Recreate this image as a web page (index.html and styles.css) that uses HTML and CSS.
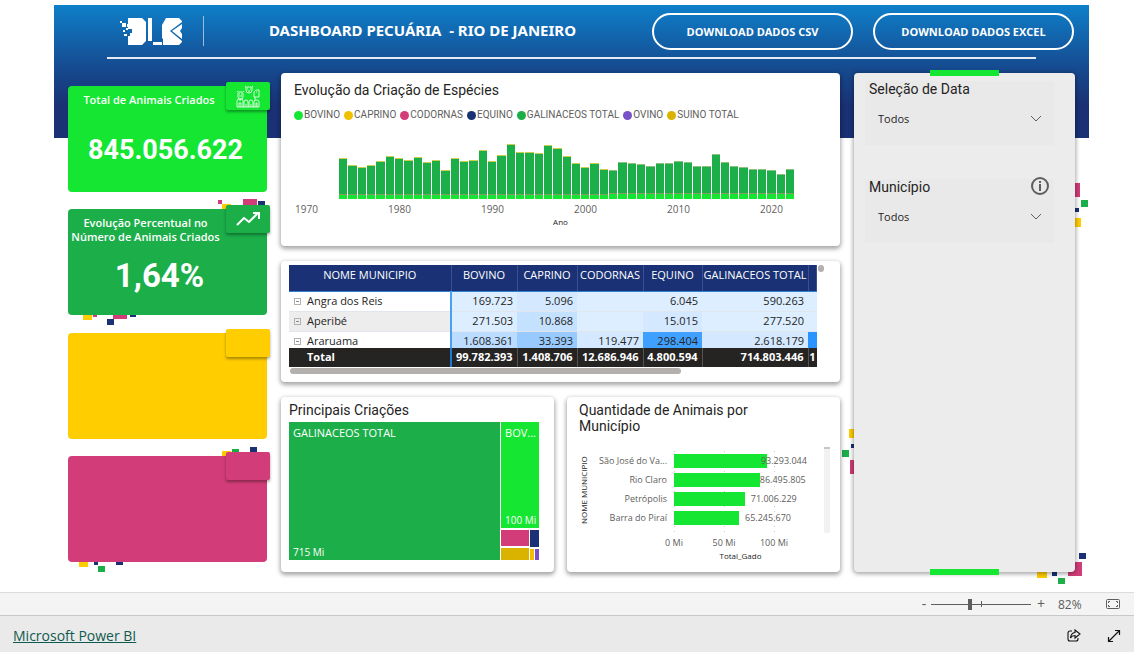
FILE: index.html
```html
<!DOCTYPE html>
<html lang="pt-BR">
<head>
<meta charset="utf-8">
<title>Dashboard Pecuária - Rio de Janeiro</title>
<link rel="stylesheet" href="styles.css">
</head>
<body>
<main class="report">
  <header class="top">
    <svg class="logo" viewBox="0 0 62 28" fill="#fff" aria-label="DLB">
      <path d="M8 1H22L26 5V24L22 28H8V19H10V16H12V12H8Z"/>
      <path d="M0 4h2v2H0zM2 6h4v4H2zM7 7h3v3H7zM6 11h2v2H6zM3 13h2v2H3zM4 17h3v2H4z"/>
      <path d="M28 1H32V24H28Z M33 25H42V28H33Z"/>
      <path d="M46 1H59L62 4V5L50 14L62 24V25L59 28H43V22L42 21V8Z"/>
      <path d="M62 7V11L60 14L62 17V22L52 14Z"/>
    </svg>
    <span class="divider"></span>
    <h1>DASHBOARD PECUÁRIA &nbsp;- RIO DE JANEIRO</h1>
    <div class="downloads">
      <button class="download" type="button">DOWNLOAD DADOS CSV</button>
      <button class="download" type="button">DOWNLOAD DADOS EXCEL</button>
    </div>
  </header>
  <hr class="rule">
  <div class="board">
    <section class="kpis">
      <article class="kpi lime">
        <h2>Total de Animais Criados</h2><strong>845.056.622</strong>
        <span class="badge"><svg class="herd" viewBox="0 0 24 24" fill="none" stroke="#fff" stroke-width="0.8"><path d="M9 2q1 2 3 1h2q2 1 3-1M10 3v3q0 3 3 3t3-3V3M11 5h1M14 5h1M12 7h2M1 7q1 2 2 1h3q1 1 2-1M2 9v4q0 2 2 2h1q2 0 2-2V9M3 10h1M5 10h1M3 12h3M4 15v2M18 8l2-2h3v7h-5v-3zM20 8h1M19 13v3M1 23V17q0-2 2-2h2q2 0 2 2v6M3 23v-4h2v4M8 23v-5q0-2 2-2t2 2v5M10 23v-3M13 23v-5q0-2 2-2t2 2v5M15 23v-3M18 23v-5q0-2 2-2h1q2 0 2 2v5M20 23v-4h1v4M1 23h22"/></svg></span>
      </article>
      <article class="kpi green">
        <i class="confetti nw"><svg viewBox="0 0 48 12"><path fill="#d23c78" d="M0 2h4v4H0zM25 1h14v8H25z"/><path fill="#ffcd00" d="M4 6h9v6H4z"/><path fill="#1a3275" d="M40 3h7v6h-7z"/></svg></i>
        <i class="confetti sw"><svg viewBox="0 0 56 12"><path fill="#ffcd00" d="M0 0h9v5H0z"/><path fill="#d23c78" d="M10 0h4v2h-4zM30 0h14v4H30z"/><path fill="#1a3275" d="M24 4h7v6h-7zM47 0h6v2h-6z"/></svg></i>
        <h2>Evolução Percentual no Número de Animais Criados</h2><strong>1,64%</strong>
        <span class="badge"><svg class="trend" viewBox="0 0 24 16" fill="none" stroke="#fff" stroke-width="2"><path d="M1 14L8 7L13 11L22 2M17 2h6v6"/></svg></span>
      </article>
      <article class="kpi yellow"><span class="badge"></span></article>
      <article class="kpi pink">
        <i class="confetti nw"><svg viewBox="0 0 48 12"><path fill="#ffcd00" d="M4 6h9v6H4z"/><path fill="#1bae49" d="M14 4h7v6h-7z"/><path fill="#1a3275" d="M32 2h7v6h-7z"/></svg></i>
        <i class="confetti sw"><svg viewBox="0 0 56 12"><path fill="#ffcd00" d="M-4 0h9v5h-9z"/><path fill="#1a3275" d="M11 0h4v3h-4zM33 0h7v3h-7z"/><path fill="#1bae49" d="M15 4h7v6h-7z"/></svg></i>
        <span class="badge"></span>
      </article>
    </section>

    <section class="visuals">
      <article class="card evolution">
        <h2>Evolução da Criação de Espécies</h2>
        <ul class="legend">
          <li class="k-lime">BOVINO</li><li class="k-gold">CAPRINO</li><li class="k-pink">CODORNAS</li><li class="k-navy">EQUINO</li><li class="k-green">GALINACEOS TOTAL</li><li class="k-purple">OVINO</li><li class="k-mustard">SUINO TOTAL</li>
        </ul>
        <div class="columns" id="columns"></div>
        <div class="years"><span>1970</span><span>1980</span><span>1990</span><span>2000</span><span>2010</span><span>2020</span></div>
        <p class="axis-title">Ano</p>
      </article>

      <article class="card matrix">
        <div class="grid-row">
          <table>
            <colgroup><col class="c-name"><col class="c-bov"><col class="c-cap"><col class="c-cod"><col class="c-equ"><col class="c-gal"><col class="c-more"></colgroup>
            <thead><tr><th>NOME MUNICIPIO</th><th>BOVINO</th><th>CAPRINO</th><th>CODORNAS</th><th>EQUINO</th><th>GALINACEOS TOTAL</th><th></th></tr></thead>
            <tbody>
              <tr><td><button class="toggle" type="button" aria-label="Expandir"></button>Angra dos Reis</td><td>169.723</td><td class="h1">5.096</td><td></td><td>6.045</td><td>590.263</td><td></td></tr>
              <tr class="alt"><td><button class="toggle" type="button" aria-label="Expandir"></button>Aperibé</td><td>271.503</td><td class="h2">10.868</td><td></td><td class="h1">15.015</td><td>277.520</td><td></td></tr>
              <tr class="cut"><td><div><button class="toggle" type="button" aria-label="Expandir"></button>Araruama</div></td><td class="h3"><div>1.608.361</div></td><td class="h4"><div>33.393</div></td><td class="h1"><div>119.477</div></td><td class="h5"><div>298.404</div></td><td class="h1"><div>2.618.179</div></td><td class="h6"></td></tr>
            </tbody>
            <tfoot><tr><td>Total</td><td>99.782.393</td><td>1.408.706</td><td>12.686.946</td><td>4.800.594</td><td>714.803.446</td><td class="last">1</td></tr></tfoot>
          </table>
          <span class="v-thumb"></span>
        </div>
        <span class="h-thumb"></span>
      </article>

      <div class="pair">
        <article class="card tree">
          <h2>Principais Criações</h2>
          <div class="treemap">
            <div class="tile green big"><span>GALINACEOS TOTAL</span><span>715 Mi</span></div>
            <div class="side">
              <div class="tile lime"><span>BOV...</span><span>100 Mi</span></div>
              <div class="small">
                <div class="stack"><i class="t-pink"></i><i class="t-mustard"></i></div>
                <div class="stack narrow"><i class="t-navy"></i><div class="tiny"><i class="t-gold"></i><i class="t-purple"></i></div></div>
              </div>
            </div>
          </div>
        </article>
        <article class="card ranking">
          <h2>Quantidade de Animais por Município</h2>
          <div class="bars">
            <span class="y-title">NOME MUNICIPIO</span>
            <ul class="names"><li>São José do Va...</li><li>Rio Claro</li><li>Petrópolis</li><li>Barra do Piraí</li></ul>
            <div class="plot">
              <div class="bar"><i style="width:65%"></i><span class="over">93.293.044</span></div>
              <div class="bar"><i style="width:60%"></i><span class="flush">86.495.805</span></div>
              <div class="bar"><i style="width:49.500%"></i><span>71.006.229</span></div>
              <div class="bar"><i style="width:45.500%"></i><span>65.245.670</span></div>
            </div>
            <span class="track"></span>
            <div class="ticks"><span>0 Mi</span><span>50 Mi</span><span>100 Mi</span></div>
            <p class="x-title">Total_Gado</p>
          </div>
        </article>
      </div>
    </section>

    <aside class="filters">
      <i class="confetti right"><svg viewBox="0 0 14 46"><path fill="#d23c78" d="M0 1h5v14H0z"/><path fill="#1bae49" d="M6 18h7v7H6z"/><path fill="#1a3275" d="M0 26h4v4H0z"/><path fill="#ffcd00" d="M0 36h6v9H0z"/></svg></i>
      <i class="confetti left"><svg viewBox="0 0 14 46"><path fill="#ffcd00" d="M9 0h5v9H9z"/><path fill="#1a3275" d="M11 15h3v4h-3z"/><path fill="#1bae49" d="M2 21h7v7H2z"/><path fill="#d23c78" d="M10 31h4v14h-4z"/></svg></i>
      <i class="confetti corner"><svg viewBox="0 0 50 34"><path fill="#ffcd00" d="M0 19h10v7H0z"/><path fill="#1a3275" d="M15 19h5v5h-5zM42 1h7v6h-7z"/><path fill="#d23c78" d="M31 10h14v14H31z"/><path fill="#1bae49" d="M21 26h7v6h-7z"/></svg></i>
      <div class="panel">
        <div class="filter">
          <label for="data">Seleção de Data</label>
          <div class="pick"><select id="data"><option>Todos</option></select><svg class="chev" viewBox="0 0 12 7"><path d="M1 1l5 5 5-5"/></svg></div>
        </div>
        <div class="filter">
          <label for="mun">Município</label>
          <div class="pick"><select id="mun"><option>Todos</option></select><svg class="chev" viewBox="0 0 12 7"><path d="M1 1l5 5 5-5"/></svg></div>
          <button class="info" type="button" aria-label="Informações"><svg viewBox="0 0 18 18"><circle cx="9" cy="9" r="8" fill="none" stroke="#605e5c" stroke-width="2"/><path fill="#605e5c" d="M8 4h2v2H8zM8 7h2v7H8z"/></svg></button>
        </div>
      </div>
    </aside>
  </div>
</main>

<div class="zoombar">
  <button type="button" aria-label="Reduzir">-</button>
  <div class="slider"><input type="range" min="0" max="100" value="39" aria-label="Zoom"></div>
  <button type="button" aria-label="Ampliar">+</button>
  <span class="pct">82%</span>
  <button class="fit" type="button" aria-label="Ajustar à página"><svg viewBox="0 0 14 10" fill="none" stroke="#605e5c"><rect x=".5" y=".5" width="13" height="9" rx="1"/><path d="M2.500 4V2.500H4M10 2.500h1.500V4M11.500 6v1.500H10M4 7.500H2.500V6"/></svg></button>
</div>
<footer class="foot">
  <a href="#">Microsoft Power BI</a>
  <button type="button" aria-label="Compartilhar"><svg viewBox="0 0 14 14" fill="none" stroke="#111" stroke-width="1.100"><path d="M5 2H3Q1 2 1 4v6q0 2 2 2h6q2 0 2-2V9M8 1l5 4-5 4V6.500Q5 6.500 3.500 9 4 4 8 3.500z"/></svg></button>
  <button type="button" aria-label="Tela cheia"><svg viewBox="0 0 14 14" fill="none" stroke="#111" stroke-width="1.200"><path d="M1.500 12.500l11-11M8 1.500h4.500V6M1.500 8v4.500H6"/></svg></button>
</footer>
<script src="chart.js"></script>
</body>
</html>
```

FILE: styles.css
```css
* { box-sizing: border-box; margin: 0; padding: 0; }
body { display: flex; flex-direction: column; min-height: 100vh; background: #fff; color: #252423; font-family: "Open Sans", "Noto Sans", sans-serif; font-size: 11px; }
button { background: none; border: 0; font: inherit; color: inherit; cursor: pointer; }
ul { list-style: none; }
svg { display: block; }

.report { flex: 1; margin: 5px 45px 0 54px; padding-bottom: 20px; background: linear-gradient(#0e7fc9, #16488d 66px, #1a3275 100px) no-repeat 0 0 / 100% 133px; }
.top { display: flex; align-items: center; gap: 21px; height: 52px; padding: 0 15px 0 66px; color: #fff; }
.logo { width: 62px; height: 28px; }
.divider { width: 1px; height: 30px; background: #9fb9d8; }
.top h1 { flex: 1; padding: 0 11px 2px 0; font-size: 15px; font-weight: 700; text-align: center; white-space: nowrap; font-family: "Noto Sans", sans-serif; }
.downloads { display: flex; gap: 20px; }
.download { width: 201px; height: 37px; border: 2px solid #fff; border-radius: 19px; font-size: 11px; font-weight: 700; white-space: nowrap; }
.rule { margin: 0 53px; border: 0; height: 2px; background: #e4ebf4; }

.board { display: grid; grid-template-columns: 199fr 559fr 221fr; gap: 14px; margin: 14px 14px 0; position: relative; z-index: 0; }
.confetti { position: absolute; z-index: -1; }
.nw { width: 48px; height: 12px; top: -11px; right: 1px; }
.sw { width: 56px; height: 12px; top: 100%; left: 15px; }
.sw svg { overflow: visible; }

.kpis { display: flex; flex-direction: column; justify-content: space-between; padding: 13px 0 10px; }
.kpi { position: relative; height: 106px; border-radius: 4px; color: #fff; text-align: center; }
.kpi h2 { padding: 7px 44px 0 0; font-size: 11px; line-height: 14px; font-weight: 600; }
.kpi strong { position: absolute; left: 0; right: 4px; bottom: 23px; font-family: Roboto, sans-serif; font-size: 27px; line-height: 38px; font-weight: 700; }
.kpi.lime h2 { padding-right: 37px; }
.kpi.green strong { right: 16px; bottom: 20px; font-size: 33px; }
.badge { position: absolute; top: -4px; right: -3px; display: grid; place-items: center; width: 44px; height: 28px; border-radius: 2px; background: inherit; box-shadow: 0 2px 3px rgba(0,0,0,.35); }
.herd { width: 24px; height: 24px; }
.trend { width: 24px; height: 16px; }
.lime { background: #14e632; }
.green { background: #1bae49; }
.yellow { background: #ffcd00; }
.pink { background: #d23c78; }

.visuals { display: flex; flex-direction: column; gap: 15px; min-width: 0; }
.card { min-width: 0; background: #fff; border-radius: 4px; box-shadow: 0 2px 4px 1px rgba(0,0,0,.35); }
.card h2, .filter label { font-family: Roboto, sans-serif; font-size: 14px; font-weight: 400; line-height: 16px; }

.evolution { height: 173px; padding-top: 9px; }
.evolution h2 { padding-left: 13px; }
.legend { display: flex; gap: 4px; padding: 9px 0 0 13px; font-family: Roboto, sans-serif; font-size: 10px; line-height: 16px; color: #605e5c; white-space: nowrap; }
.legend li { display: flex; align-items: center; gap: 1px; }
.legend li::before { content: ""; width: 9px; height: 9px; border-radius: 50%; }
.k-lime::before { background: #14e632; }
.k-gold::before { background: #f0c000; }
.k-pink::before { background: #d23c78; }
.k-navy::before { background: #1a3275; }
.k-green::before { background: #1bae49; }
.k-purple::before { background: #7850c8; }
.k-mustard::before { background: #d9b300; }
.columns { display: flex; align-items: flex-end; gap: 1px; height: 76px; margin: 0 46px 0 58px; }
.columns i { flex: 1; border-top: 1px solid #c9cf4c; background: linear-gradient(0deg, #14e632 4px, #7f9a63 4px, #7f9a63 5px, #1bae49 5px); }
.columns i.late { background: linear-gradient(0deg, #14e632 5px, #7f9a63 5px, #7f9a63 6px, #1bae49 6px); border-top-color: #8fbf7c; }
.years { display: flex; justify-content: space-between; margin: 3px 57px 0 14px; font-size: 10px; line-height: 14px; color: #605e5c; }
.axis-title { font-size: 8px; line-height: 12px; text-align: center; }

.matrix { padding: 4px 8px 9px; height: 121px; }
.grid-row { display: flex; gap: 1px; }
.matrix table { flex: 1; width: 100%; border-collapse: collapse; table-layout: fixed; font-size: 11px; }
.c-name { width: 162px; } .c-bov { width: 66px; } .c-cap { width: 60px; } .c-cod { width: 66px; } .c-equ { width: 59px; } .c-gal { width: 106px; }
.matrix th { height: 26px; padding-bottom: 6px; background: #1a3275; color: #fff; font-weight: 400; white-space: nowrap; border-right: 1px solid #3a5090; border-bottom: 1px solid #2f80d0; }
.matrix tbody td { height: 20px; line-height: 17px; padding: 0 4px 2px 0; text-align: right; background: #dceeff; border-bottom: 1px solid #e0e6ec; white-space: nowrap; }
.matrix tbody td:first-child { padding-left: 5px; text-align: left; background: #fff; border-right: 2px solid #4aa0f0; }
.matrix tbody .alt td:first-child { background: #ededed; }
.matrix tbody .cut td { height: 16px; padding-bottom: 0; border-bottom: 0; }
.cut div { height: 16px; line-height: 18px; overflow: hidden; }
.matrix tbody .h1 { background: #d4e9ff; } .matrix tbody .h2 { background: #c4e1ff; } .matrix tbody .h3 { background: #bcdcff; }
.matrix tbody .h4 { background: #98caff; } .matrix tbody .h5 { background: #40a0ff; } .matrix tbody .h6 { background: #2894ff; }
.matrix tfoot td { height: 19px; padding: 0 4px 1px 0; background: #252423; color: #fff; font-weight: 700; text-align: right; border-right: 1px solid #55534f; white-space: nowrap; }
.matrix tfoot td:first-child { padding-left: 18px; text-align: left; border-right: 2px solid #1f78d0; }
.matrix tfoot .last { padding: 0 1px 1px 0; border: 0; }
.toggle { display: inline-block; position: relative; width: 7px; height: 7px; margin-right: 6px; border: 1px solid #b3b0ad; vertical-align: 1px; }
.toggle::after { content: ""; position: absolute; left: 1px; right: 1px; top: 2px; height: 1px; background: #8a8886; }
.v-thumb { width: 6px; height: 7px; border-radius: 3px; background: #b3b0ad; margin-right: 8px; }
.h-thumb { display: block; width: 72%; height: 6px; margin: 1px 0 0 1px; border-radius: 3px; background: #b3b0ad; }

.pair { display: grid; grid-template-columns: 1fr 1fr; gap: 13px; height: 175px; }
.tree { display: flex; flex-direction: column; padding: 5px 15px 12px 8px; }
.treemap { flex: 1; display: flex; gap: 1px; margin-top: 4px; color: #fff; }
.tile { display: flex; flex-direction: column; justify-content: space-between; padding: 4px 3px 1px 4px; line-height: 14px; white-space: nowrap; }
.tile span + span { font-size: 10px; line-height: 13px; }
.big { flex: 210; }
.side { flex: 39; display: flex; flex-direction: column; gap: 2px; min-width: 0; }
.side .tile { flex: 105; }
.small { flex: 31; display: flex; gap: 1px; }
.stack { flex: 3; display: flex; flex-direction: column; gap: 2px; }
.stack.narrow { flex: 1; }
.stack i { flex: 1; }
.stack .t-pink { flex: 16; background: #d23c78; }
.stack .t-mustard { flex: 13; background: #d9b300; }
.stack .t-navy { flex: 18; background: #1a3275; }
.tiny { flex: 11; display: flex; gap: 1px; }
.t-gold { background: #f0c000; } .t-purple { background: #7850c8; }

.ranking { padding: 5px 10px 0 12px; }
.ranking h2 { padding-right: 60px; }
.bars { display: grid; grid-template-columns: 10px 71px 1fr 6px; column-gap: 7px; grid-template-rows: 86px 18px 10px; margin-top: 13px; color: #605e5c; }
.y-title { writing-mode: vertical-rl; transform: rotate(180deg); text-align: center; font-size: 8px; line-height: 10px; white-space: nowrap; color: #252423; }
.names { padding-top: 4px; font-size: 9px; line-height: 19px; text-align: right; white-space: nowrap; }
.plot { padding-top: 4px; background: repeating-linear-gradient(#fff 0 4px, transparent 4px 5px), linear-gradient(90deg, #ccc 1px, transparent 1px) 0 0 / 50px 100%; }
.bar { display: flex; align-items: center; height: 19px; }
.bar i { height: 14px; background: #14e632; flex: none; }
.bar span { margin-left: 6px; font-size: 9px; }
.bar .over { margin-left: -6px; }
.bar .flush { margin-left: 0; }
.track { background: #f3f2f1; border-top: 2px solid #c8c6c4; }
.ticks { grid-column: 3; display: flex; align-items: center; margin-left: -25px; font-size: 9px; }
.ticks span { flex: 0 0 50px; text-align: center; }
.x-title { grid-column: 3; padding-right: 10px; text-align: center; font-size: 8px; line-height: 10px; color: #252423; }

.filters { position: relative; }
.panel { position: relative; height: 100%; padding: 8px 21px 0 11px; background: #ececec; border-radius: 4px; box-shadow: 0 1px 4px 1px rgba(0,0,0,.35); }
.panel::before, .panel::after { content: ""; position: absolute; left: 76px; width: 31%; height: 6px; background: #14e632; }
.panel::before { top: -3px; }
.panel::after { bottom: -3px; }
.right { width: 14px; height: 46px; left: 100%; top: 109px; }
.left { width: 14px; height: 46px; right: 100%; top: 356px; }
.corner { width: 50px; height: 34px; right: -12px; bottom: -14px; }
.filter { position: relative; height: 64px; margin-bottom: 34px; padding-left: 4px; background: #e9e9e9; }
.filter label { display: block; }
.pick { position: relative; margin-top: 10px; }
.pick select { width: 100%; height: 22px; padding-left: 9px; border: 0; background: transparent; appearance: none; font-family: inherit; font-size: 11px; color: #252423; }
.chev { position: absolute; right: 12px; top: 8px; width: 12px; height: 7px; fill: none; stroke: #605e5c; pointer-events: none; }
.info { position: absolute; right: 5px; top: -2px; width: 18px; height: 18px; }

.zoombar { display: flex; align-items: center; justify-content: flex-end; height: 24px; padding-right: 14px; background: #f4f4f4; border-top: 1px solid #dcdcdc; border-bottom: 1px solid #c8c8c8; color: #605e5c; }
.zoombar button { width: 14px; font-size: 14px; line-height: 20px; }
.slider { position: relative; width: 100px; height: 12px; margin: 0 3px 0 0; }
.slider::before { content: ""; position: absolute; left: 50px; top: 3px; width: 1px; height: 6px; background: #605e5c; }
.slider input { display: block; width: 100%; height: 12px; appearance: none; background: linear-gradient(#605e5c, #605e5c) no-repeat center / 100% 1px; }
.slider input::-webkit-slider-thumb { appearance: none; width: 4px; height: 11px; background: #605e5c; }
.pct { width: 43px; padding-left: 10px; font-size: 12px; }
.zoombar .fit { margin-left: 15px; }
.fit svg { width: 14px; height: 10px; }
.foot { display: flex; align-items: center; gap: 26px; height: 36px; padding: 3px 13px 0; background: #eaeaea; }
.foot a { margin-right: auto; color: #0f5a50; font-size: 14px; }
.foot svg { width: 14px; height: 14px; }
```

FILE: chart.js
```js
// Column heights in pixels, one per year, 1974 to 2022.
const totals = [41, 34, 32, 34, 38, 43, 41, 39, 42, 37, 39, 29, 41, 38, 39, 49, 38, 44, 55, 47, 47, 46, 54, 51, 43,
  36, 32, 36, 30, 29, 37, 36, 35, 33, 36, 36, 38, 37, 33, 33, 45, 37, 33, 32, 30, 30, 29, 25, 30];
const columns = document.getElementById("columns");
totals.forEach((height, index) => {
  const column = document.createElement("i");
  column.style.height = height + "px";
  if (index > 28) column.className = "late";
  columns.append(column);
});
```
